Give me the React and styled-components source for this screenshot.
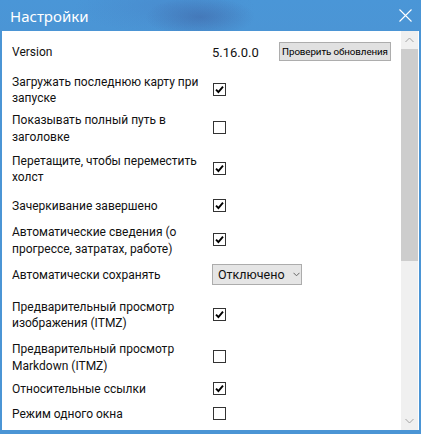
import styled, { createGlobalStyle } from 'styled-components'

const GlobalStyle = createGlobalStyle`
  html, body {
    margin: 0;
    padding: 0;
    background: #ffffff;
  }
  body {
    font-family: Roboto, "Noto Sans", sans-serif;
    color: #111;
  }
`

const Window = styled.div`
  width: 421px;
  height: 434px;
  display: flex;
  flex-direction: column;
  background: #4b95d5;
  overflow: hidden;
`

const TitleBar = styled.div`
  height: 31px;
  flex: none;
  display: flex;
  align-items: center;
  justify-content: space-between;
  padding: 0 9px 0 10px;
  background:
    radial-gradient(ellipse 55px 20px at 200px 17px, rgba(62, 96, 160, 0.5), rgba(62, 96, 160, 0) 100%),
    radial-gradient(ellipse 90px 28px at 165px 6px, rgba(70, 120, 190, 0.3), rgba(70, 120, 190, 0) 100%),
    linear-gradient(#4a96d7, #4b95d5);
`

const Title = styled.span`
  color: #fff;
  font-size: 15px;
  font-family: "Noto Sans", sans-serif;
`

const CloseButton = styled.div`
  width: 14px;
  height: 14px;
  display: flex;
  align-items: center;
  justify-content: center;
`

const Body = styled.div`
  flex: 1;
  display: flex;
  background: #fff;
  margin: 0 2px 4px 2px;
  overflow: hidden;
`

const SettingsList = styled.div`
  flex: 1;
  padding-left: 10px;
  display: flex;
  flex-direction: column;
`

const Row = styled.div`
  height: ${(p) => p.$h}px;
  flex: none;
  display: grid;
  grid-template-columns: 200px 1fr;
  align-items: center;
`

const Label = styled.div`
  font-size: 12px;
  line-height: 16.5px;
  padding-top: 2px;
  white-space: pre-line;
`

const Control = styled.div`
  display: flex;
  align-items: center;
`

const VersionText = styled.span`
  font-size: 13px;
  width: 67px;
  flex: none;
  margin-top: 2px;
`

const UpdateButton = styled.button`
  height: 19px;
  width: 112px;
  padding: 0;
  background: #e1e1e1;
  border: 1px solid #adadad;
  font-family: Roboto, sans-serif;
  font-size: 9.8px;
  letter-spacing: -0.1px;
  white-space: nowrap;
  overflow: hidden;
  color: #000;
`

const Box = styled.div`
  width: 11px;
  height: 11px;
  border: 1px solid #333;
  background: #fff;
  display: flex;
  align-items: center;
  justify-content: center;
  margin-left: 1px;
`

const Select = styled.div`
  width: 90px;
  height: 21px;
  box-sizing: border-box;
  border: 1px solid #acacac;
  background: #e5e5e5;
  display: flex;
  align-items: center;
  gap: 8px;
  padding: 0 0 0 5px;
  font-size: 12.5px;
  white-space: nowrap;
`

const Scrollbar = styled.div`
  width: 17px;
  flex: none;
  margin-right: 1px;
  background: #f0f0f0;
  display: flex;
  flex-direction: column;
`

const Arrow = styled.div`
  height: 18px;
  flex: none;
  display: flex;
  align-items: center;
  justify-content: center;
`

const Track = styled.div`
  flex: 1;
`

const Thumb = styled.div`
  height: 212px;
  background: #cdcdcd;
`

function Check({ on }) {
  return (
    <Box>
      {on && (
        <svg width="9" height="9" viewBox="0 0 9 9">
          <path d="M1 4.6 L3.4 7 L8 1.6" fill="none" stroke="#000" strokeWidth="1.9" />
        </svg>
      )}
    </Box>
  )
}

const settings = [
  { label: 'Загружать последнюю карту при\nзапуске', on: true, h: 36 },
  { label: 'Показывать полный путь в\nзаголовке', on: false, h: 41 },
  { label: 'Перетащите, чтобы переместить\nхолст', on: true, h: 40 },
  { label: 'Зачеркивание завершено', on: true, h: 34 },
  { label: 'Автоматические сведения (о\nпрогрессе, затратах, работе)', on: true, h: 34 },
  { label: 'Автоматически сохранять', select: 'Отключено', h: 37 },
  { label: 'Предварительный просмотр\nизображения (ITMZ)', on: true, h: 42 },
  { label: 'Предварительный просмотр\nMarkdown (ITMZ)', on: false, h: 43 },
  { label: 'Относительные ссылки', on: true, h: 20 },
  { label: 'Режим одного окна', on: false, h: 30 },
]

export default function App() {
  return (
    <>
      <GlobalStyle />
      <Window>
        <TitleBar>
          <Title>Настройки</Title>
          <CloseButton>
            <svg width="13" height="13" viewBox="0 0 13 13">
              <path d="M0.5 0.5 L12.5 12.5 M12.5 0.5 L0.5 12.5" stroke="#fff" strokeWidth="1.1" />
            </svg>
          </CloseButton>
        </TitleBar>
        <Body>
          <SettingsList>
            <Row $h={40}>
              <Label>Version</Label>
              <Control>
                <VersionText>5.16.0.0</VersionText>
                <UpdateButton>Проверить обновления</UpdateButton>
              </Control>
            </Row>
            {settings.map((s) => (
              <Row key={s.label} $h={s.h}>
                <Label>{s.label}</Label>
                <Control>
                  {s.select ? (
                    <Select>
                      <span>{s.select}</span>
                      <svg width="7" height="5" viewBox="0 0 7 5">
                        <path d="M0.5 0.8 L3.5 3.8 L6.5 0.8" fill="none" stroke="#666" strokeWidth="1" />
                      </svg>
                    </Select>
                  ) : (
                    <Check on={s.on} />
                  )}
                </Control>
              </Row>
            ))}
          </SettingsList>
          <Scrollbar>
            <Arrow>
              <svg width="9" height="6" viewBox="0 0 9 6">
                <path d="M0.5 5 L4.5 1 L8.5 5" fill="none" stroke="#a3a3a3" strokeWidth="1" />
              </svg>
            </Arrow>
            <Thumb />
            <Track />
            <Arrow>
              <svg width="9" height="6" viewBox="0 0 9 6">
                <path d="M0.5 1 L4.5 5 L8.5 1" fill="none" stroke="#a3a3a3" strokeWidth="1" />
              </svg>
            </Arrow>
          </Scrollbar>
        </Body>
      </Window>
    </>
  )
}
